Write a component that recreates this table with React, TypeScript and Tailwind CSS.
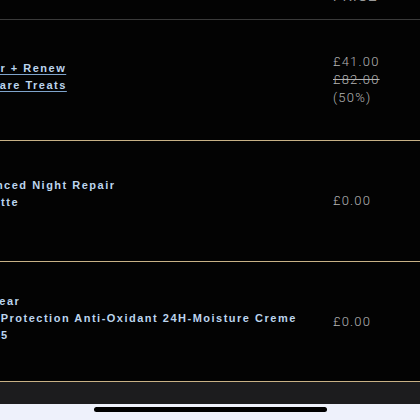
const rows = [
  {
    lines: ["Repair + Renew Skincare Treats"],
    link: true,
    price: ["£41.00"],
    was: "£82.00",
    saving: "(50%)",
    h: "h-[121px]",
    pad: "pb-[6px]",
  },
  {
    lines: ["Advanced Night Repair", "Roulette"],
    link: false,
    price: ["£0.00"],
    h: "h-[121px]",
    pad: "pb-[14px]",
  },
  {
    lines: ["DayWear", "Multi Protection Anti-Oxidant 24H-Moisture Creme", "SPF 15"],
    link: false,
    price: ["£0.00"],
    h: "h-[120px]",
    pad: "pb-[6px]",
  },
];

export default function App() {
  return (
    <div className="w-[420px] h-[420px] overflow-hidden bg-[#030303] flex flex-col">
      {/* Column header, mostly scrolled away */}
      <div className="h-[20px] shrink-0 border-b border-[#3a3a3a] overflow-hidden">
        <div className="ml-[333px] -mt-[10px] text-[13px] leading-[14px] tracking-[1px] text-[#9a9a9a] font-['Liberation_Sans',sans-serif]">
          PRICE
        </div>
      </div>

      {rows.map((r, i) => (
        <div key={i} className={`${r.h} shrink-0 flex border-b border-[#c8b186]`}>
          <div className={`flex-1 -ml-[37px] flex items-center ${r.pad}`}>
            <div className="text-[11px] leading-[17px] font-bold tracking-[1.5px] text-[#bcd5ee] font-['Liberation_Sans',Arial,sans-serif]">
              {r.link ? (
                <a className="underline decoration-[#7fa4cc] underline-offset-[2px] max-w-[140px] inline-block">
                  {r.lines[0]}
                </a>
              ) : (
                r.lines.map((l) => <div key={l}>{l}</div>)
              )}
            </div>
          </div>
          <div className="w-[87px] shrink-0 flex flex-col justify-center text-[13px] leading-[18px] tracking-[1.2px] text-[#b4b4b4] font-['Roboto',sans-serif] font-light">
            {r.price.map((p) => (
              <div key={p}>{p}</div>
            ))}
            {r.was && <div className="line-through">{r.was}</div>}
            {r.saving && <div>{r.saving}</div>}
          </div>
        </div>
      ))}

      <div className="h-[22px] shrink-0 bg-[#1c1c1e]" />
      <div className="flex-1 bg-[#eef1fb] flex justify-center pt-[3px]">
        <div className="w-[233px] h-[5px] rounded-full bg-black" />
      </div>
    </div>
  );
}
